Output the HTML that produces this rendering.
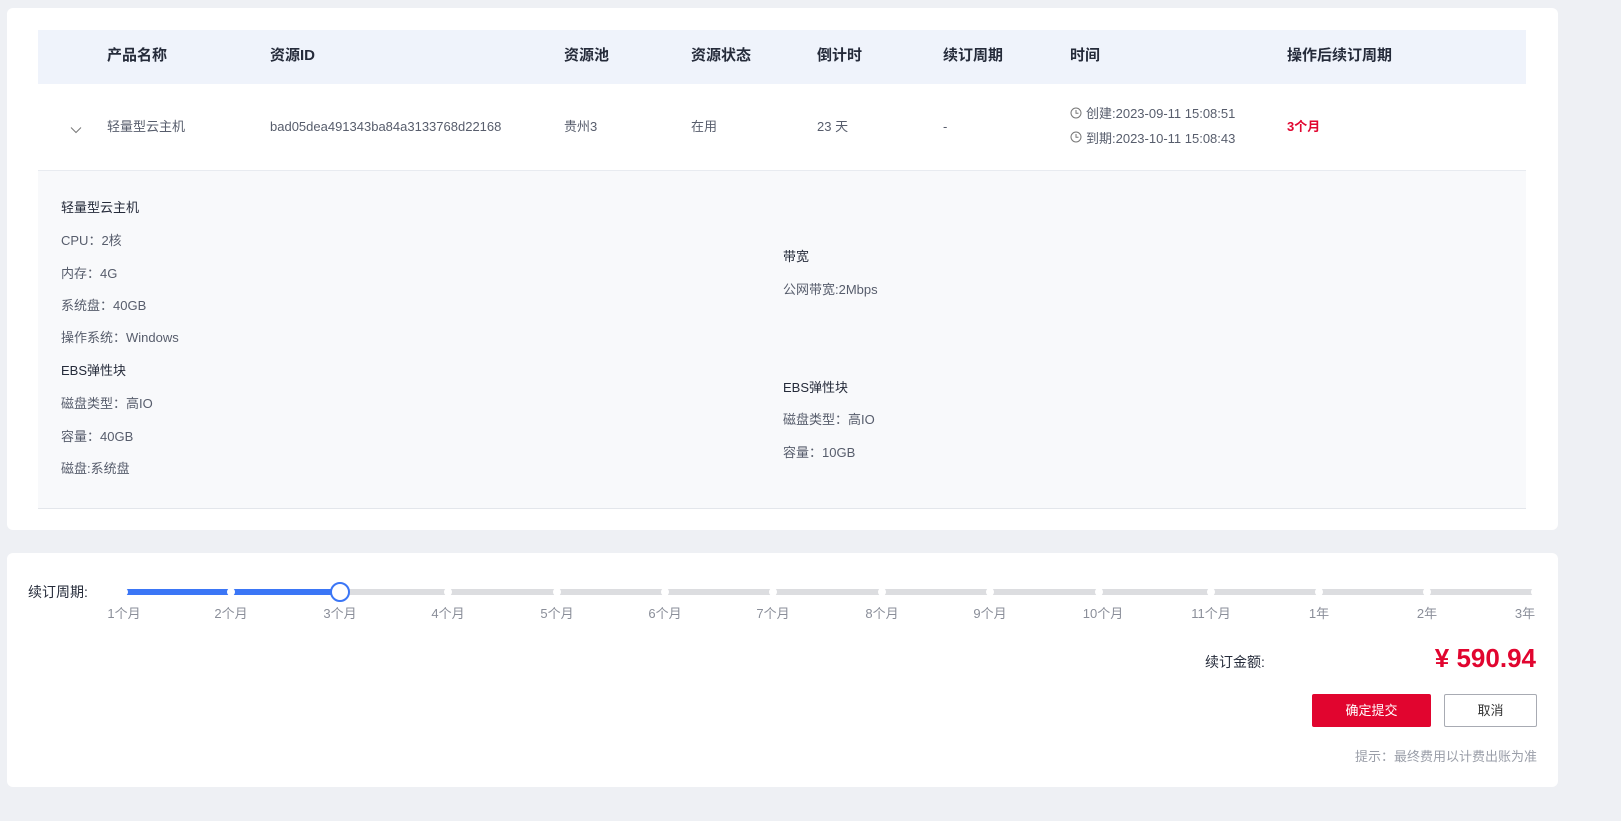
<!DOCTYPE html>
<html><head><meta charset="utf-8"><style>
*{margin:0;padding:0;box-sizing:border-box}
body{width:1621px;height:821px;background:#eef0f4;font-family:"Liberation Sans","Noto Sans CJK SC",sans-serif;position:relative;overflow:hidden;color:#333}
.a{position:absolute;white-space:nowrap;line-height:18px}
.card{position:absolute;background:#fff;border-radius:6px}
.h{font-size:15px;font-weight:bold;color:#252b3a;top:47px}
.c{font-size:13px;color:#575d6c;top:118px}
.d{font-size:13px;color:#575d6c}
.dt{font-size:13px;color:#252b3a}
.lbl{font-size:13px;color:#8a8e99;top:605px;transform:translateX(-50%)}
.dot{position:absolute;top:588px;width:8px;height:8px;border-radius:50%;background:#fff;transform:translateX(-50%)}
</style></head><body>
<div class="card" style="left:7px;top:8px;width:1551px;height:522px"></div>
<div class="a" style="left:38px;top:30px;width:1488px;height:54px;background:#eff3fb"></div>
<div class="a" style="left:38px;top:170px;width:1488px;height:339px;background:#f8f9fb;border-top:1px solid #e8ebf0;border-bottom:1px solid #e3e6eb"></div>
<div class="a h" style="left:107px">产品名称</div>
<div class="a h" style="left:270px">资源ID</div>
<div class="a h" style="left:564px">资源池</div>
<div class="a h" style="left:691px">资源状态</div>
<div class="a h" style="left:817px">倒计时</div>
<div class="a h" style="left:943px">续订周期</div>
<div class="a h" style="left:1070px">时间</div>
<div class="a h" style="left:1287px">操作后续订周期</div>
<svg class="a" style="left:70px;top:126px" width="12" height="8"><path d="M1 1.5L6 6.5L11 1.5" fill="none" stroke="#777" stroke-width="1"/></svg>
<div class="a c" style="left:107px">轻量型云主机</div>
<div class="a c" style="left:270px">bad05dea491343ba84a3133768d22168</div>
<div class="a c" style="left:564px">贵州3</div>
<div class="a c" style="left:691px">在用</div>
<div class="a c" style="left:817px">23 天</div>
<div class="a c" style="left:943px">-</div>
<svg class="a" style="left:1070px;top:107px" width="12" height="12"><circle cx="6" cy="6" r="5" fill="none" stroke="#777"/><path d="M6 3v3.3h2.5" fill="none" stroke="#777"/></svg>
<div class="a d" style="left:1086px;top:105px">创建:2023-09-11 15:08:51</div>
<svg class="a" style="left:1070px;top:131px" width="12" height="12"><circle cx="6" cy="6" r="5" fill="none" stroke="#777"/><path d="M6 3v3.3h2.5" fill="none" stroke="#777"/></svg>
<div class="a d" style="left:1086px;top:130px">到期:2023-10-11 15:08:43</div>
<div class="a" style="left:1287px;top:118px;font-size:13px;font-weight:bold;color:#e1052f">3个月</div>
<div class="a dt" style="left:61px;top:199px">轻量型云主机</div>
<div class="a d" style="left:61px;top:232px">CPU：2核</div>
<div class="a d" style="left:61px;top:265px">内存：4G</div>
<div class="a d" style="left:61px;top:297px">系统盘：40GB</div>
<div class="a d" style="left:61px;top:329px">操作系统：Windows</div>
<div class="a dt" style="left:61px;top:362px">EBS弹性块</div>
<div class="a d" style="left:61px;top:395px">磁盘类型：高IO</div>
<div class="a d" style="left:61px;top:428px">容量：40GB</div>
<div class="a d" style="left:61px;top:460px">磁盘:系统盘</div>
<div class="a dt" style="left:783px;top:248px">带宽</div>
<div class="a d" style="left:783px;top:281px">公网带宽:2Mbps</div>
<div class="a dt" style="left:783px;top:379px">EBS弹性块</div>
<div class="a d" style="left:783px;top:411px">磁盘类型：高IO</div>
<div class="a d" style="left:783px;top:444px">容量：10GB</div>

<div class="card" style="left:7px;top:553px;width:1551px;height:234px"></div>
<div class="a" style="left:28px;top:583px;font-size:14px;color:#252b3a">续订周期:</div>
<div class="a" style="left:124px;top:589px;width:1411px;height:6px;border-radius:3px;background:#dcdde0"></div>
<div class="a" style="left:124px;top:589px;width:216px;height:6px;border-radius:3px;background:#3b76f6"></div>
<div class="dot" style="left:124px"></div><div class="dot" style="left:231px"></div>
<div class="dot" style="left:448px"></div><div class="dot" style="left:557px"></div><div class="dot" style="left:665px"></div><div class="dot" style="left:773px"></div><div class="dot" style="left:882px"></div><div class="dot" style="left:990px"></div><div class="dot" style="left:1099px"></div><div class="dot" style="left:1211px"></div><div class="dot" style="left:1319px"></div><div class="dot" style="left:1427px"></div><div class="dot" style="left:1535px"></div>
<div class="a" style="left:330px;top:582px;width:20px;height:20px;border-radius:50%;background:#fff;border:2px solid #3b76f6"></div>
<div class="a lbl" style="left:124px">1个月</div><div class="a lbl" style="left:231px">2个月</div><div class="a lbl" style="left:340px">3个月</div><div class="a lbl" style="left:448px">4个月</div><div class="a lbl" style="left:557px">5个月</div><div class="a lbl" style="left:665px">6个月</div><div class="a lbl" style="left:773px">7个月</div><div class="a lbl" style="left:882px">8个月</div><div class="a lbl" style="left:990px">9个月</div><div class="a lbl" style="left:1103px">10个月</div><div class="a lbl" style="left:1211px">11个月</div><div class="a lbl" style="left:1319px">1年</div><div class="a lbl" style="left:1427px">2年</div><div class="a lbl" style="left:1525px">3年</div>
<div class="a" style="left:1205px;top:653px;font-size:14px;color:#252b3a">续订金额:</div>
<div class="a" style="right:85px;top:643px;font-size:26px;line-height:30px;font-weight:bold;color:#e1052f">¥ 590.94</div>
<div class="a" style="left:1312px;top:694px;width:119px;height:33px;background:#e1052f;border-radius:2px;color:#fff;font-size:13px;text-align:center;line-height:33px">确定提交</div>
<div class="a" style="left:1444px;top:694px;width:93px;height:33px;border:1px solid #a8abb3;border-radius:2px;color:#333;font-size:13px;text-align:center;line-height:31px">取消</div>
<div class="a" style="right:84px;top:748px;font-size:13px;color:#9a9ea8">提示：最终费用以计费出账为准</div>
</body></html>
